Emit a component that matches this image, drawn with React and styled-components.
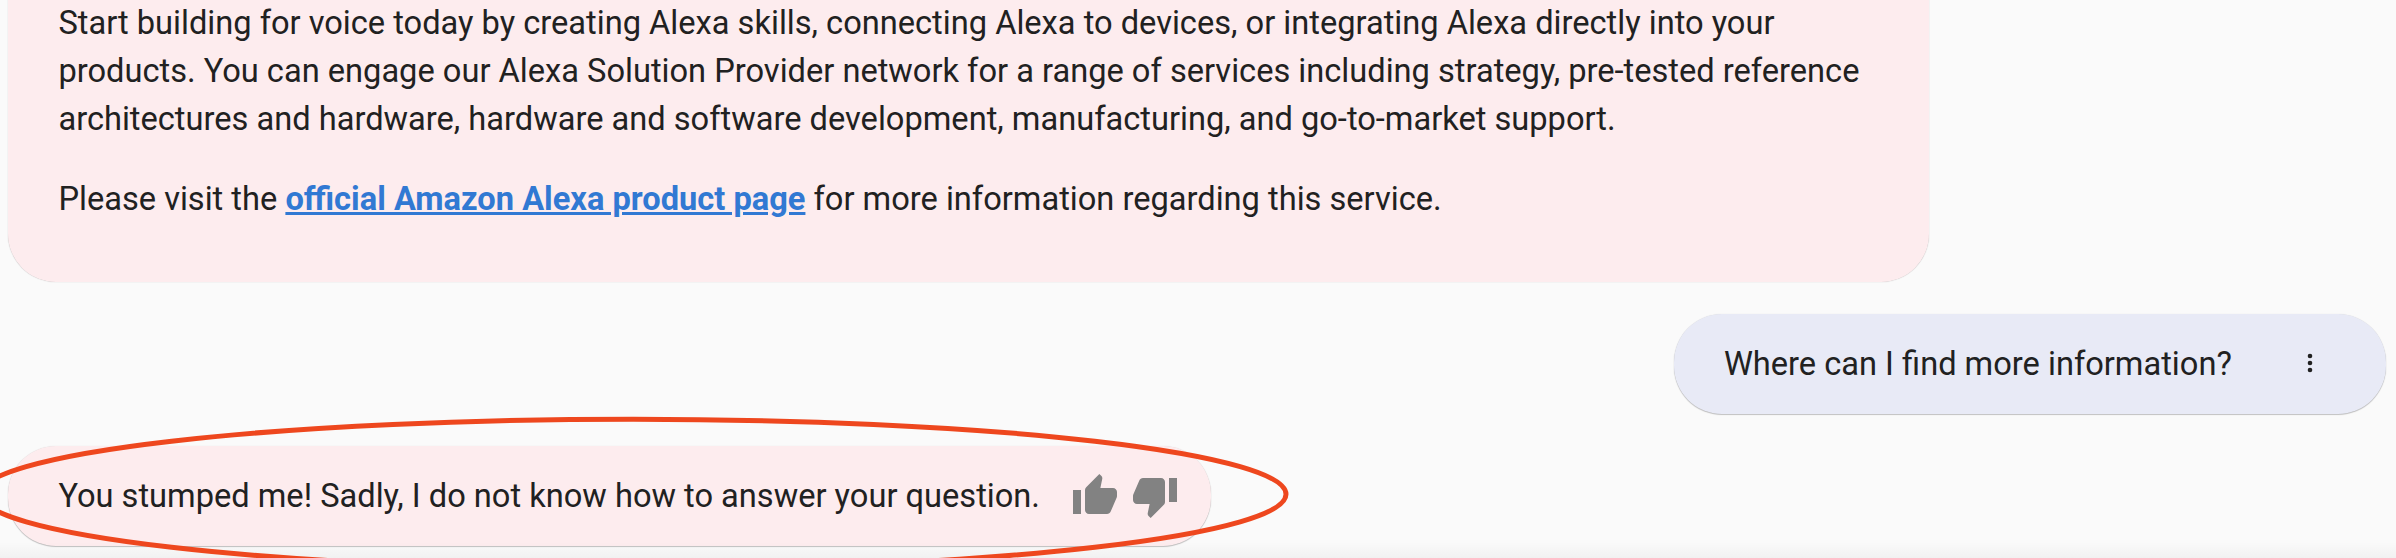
import React from "react";
import styled, { createGlobalStyle } from "styled-components";
import { MdThumbUp, MdThumbDown } from "react-icons/md";

const GlobalStyle = createGlobalStyle`
  *, *::before, *::after { box-sizing: border-box; }
  body { margin: 0; background: #fafafa; }
`;

const Chat = styled.main`
  position: relative;
  display: flex;
  flex-direction: column;
  gap: 31.5px;
  width: 2396px;
  height: 558px;
  padding: 0 10px 0 8px;
  overflow: hidden;
  background: #fafafa;
  color: #212121;
  font: 400 32.61px/48px Roboto, "Liberation Sans", sans-serif;
`;

const Bubble = styled.section`
  flex: none;
  display: flex;
  align-items: center;
  height: 100.5px;
  padding: 0 28px 0 50.4px;
  border-radius: 48px;
  white-space: nowrap;
  align-self: ${(p) => (p.$mine ? "flex-end" : "flex-start")};
  width: ${(p) => p.$width}px;
  background: ${(p) => (p.$mine ? "#e8eaf6" : "#fdecee")};
  box-shadow: 0 1px 1px rgba(0, 0, 0, 0.22), 0 0 1px rgba(0, 0, 0, 0.14);
`;

const LongBubble = styled(Bubble)`
  flex-direction: column;
  align-items: flex-start;
  gap: 32px;
  height: 283px;
  margin-top: -1px;
  border-radius: 0 0 48px 48px;
  box-shadow: 0 0 1px rgba(0, 0, 0, 0.3);
`;

const Paragraph = styled.p`
  margin: 0;
`;

const ProductLink = styled.a`
  color: #3179d3;
  font-weight: 700;
  text-decoration: underline;
`;

const MenuButton = styled.button`
  display: flex;
  align-items: center;
  justify-content: center;
  width: 48px;
  height: 48px;
  margin: 0 24px 0 auto;
  padding: 0;
  border: 0;
  background: none;
  color: #212121;
`;

const Feedback = styled.div`
  display: flex;
  gap: 12px;
  margin: 0 3.5px 0 auto;
  color: #828282;
`;

const FeedbackButton = styled.button`
  display: flex;
  padding: 0;
  border: 0;
  background: none;
  color: inherit;
`;

const BottomFade = styled.div`
  position: absolute;
  left: 0;
  right: 0;
  bottom: 0;
  height: 16px;
  background: linear-gradient(rgba(0, 0, 0, 0), rgba(0, 0, 0, 0.035));
`;

const Highlight = styled.svg`
  position: absolute;
  left: 0;
  bottom: 0;
`;

export default function App() {
  return (
    <>
      <GlobalStyle />
      <Chat>
        <LongBubble $width={1920.5}>
          <Paragraph>
            Start building for voice today by creating Alexa skills, connecting Alexa to devices, or integrating Alexa directly into your
            <br />
            products. You can engage our Alexa Solution Provider network for a range of services including strategy, pre-tested reference
            <br />
            architectures and hardware, hardware and software development, manufacturing, and go-to-market support.
          </Paragraph>
          <Paragraph>
            Please visit the <ProductLink href="#">official Amazon Alexa product page</ProductLink> for more information regarding this service.
          </Paragraph>
        </LongBubble>
        <Bubble $mine $width={712.5}>
          <span>Where can I find more information?</span>
          <MenuButton aria-label="Message options">
            <svg width="8" height="24" viewBox="0 0 8 24" fill="currentColor">
              <circle cx="4" cy="4" r="2.3" />
              <circle cx="4" cy="11" r="2.3" />
              <circle cx="4" cy="18" r="2.3" />
            </svg>
          </MenuButton>
        </Bubble>
        <Bubble $width={1202.5}>
          <span>You stumped me! Sadly, I do not know how to answer your question.</span>
          <Feedback>
            <FeedbackButton aria-label="Helpful"><MdThumbUp size={48} /></FeedbackButton>
            <FeedbackButton aria-label="Not helpful"><MdThumbDown size={48} /></FeedbackButton>
          </Feedback>
        </Bubble>
        <BottomFade />
        <Highlight width="1300" height="158" viewBox="0 400 1300 158" fill="none">
          <ellipse cx="633.2" cy="494.2" rx="652.8" ry="75" stroke="#ee471e" strokeWidth="5" />
        </Highlight>
      </Chat>
    </>
  );
}
